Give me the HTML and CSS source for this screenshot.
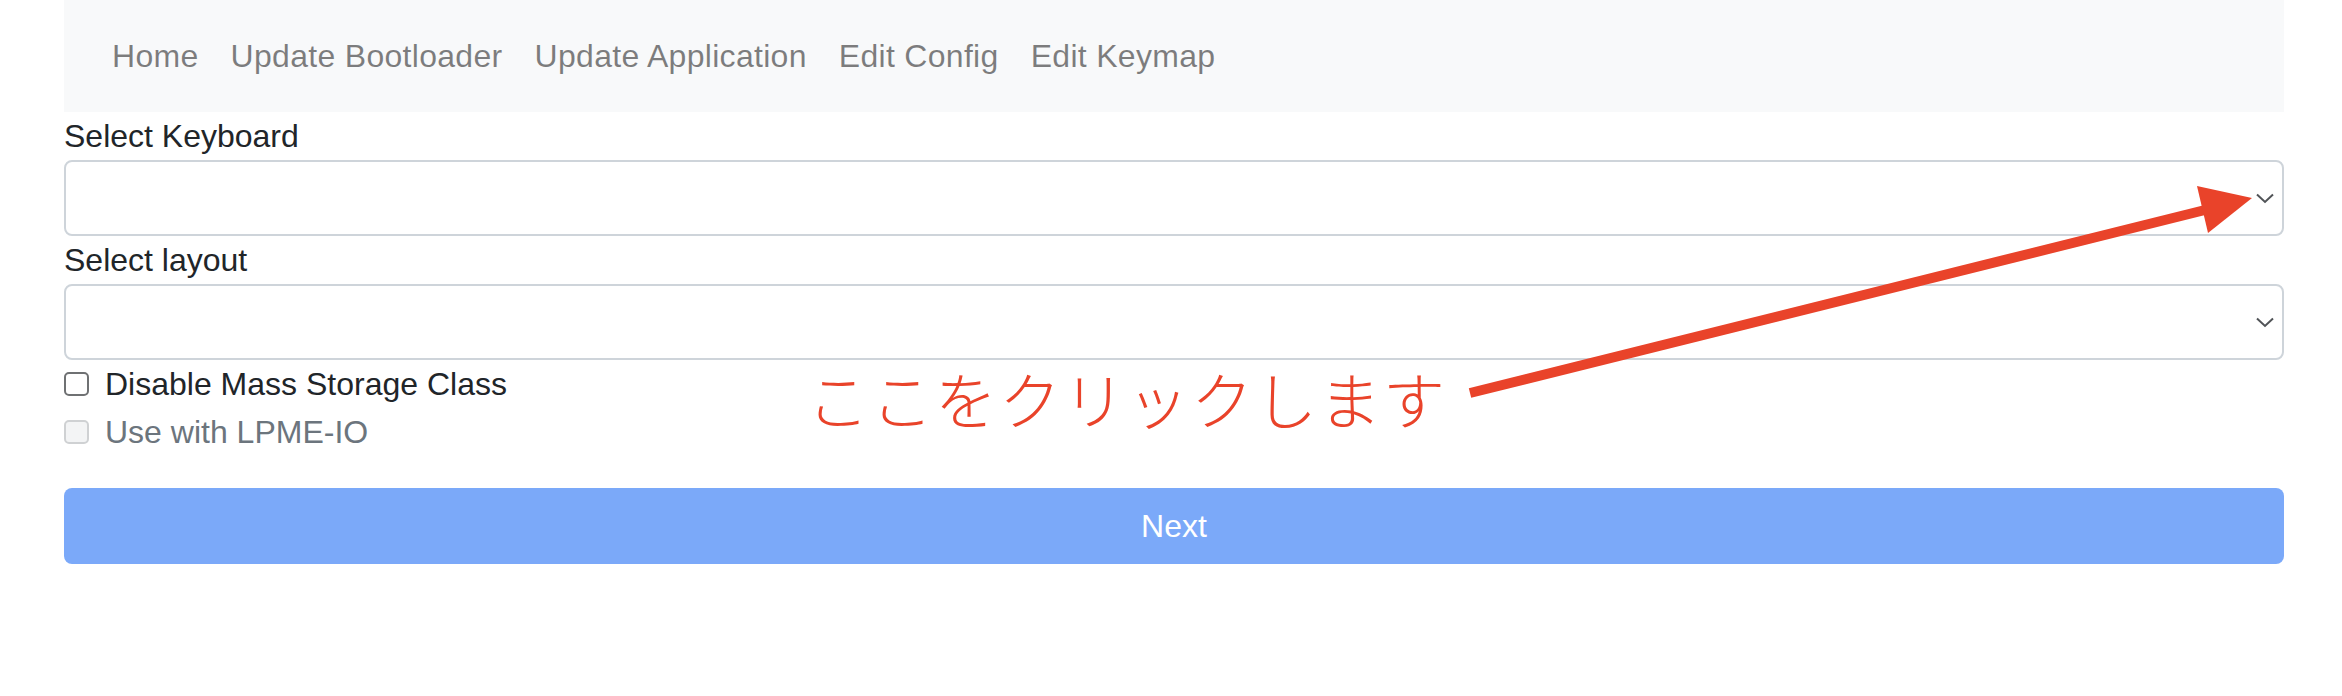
FILE: index.html
```html
<!DOCTYPE html>
<html lang="ja">
<head>
<meta charset="utf-8">
<title>Keyboard Setup</title>
<link rel="stylesheet" href="styles.css">
</head>
<body>
<div class="page">
  <div class="container">
    <nav class="navbar">
      <ul class="nav">
        <li><a class="nav-link" href="#">Home</a></li>
        <li><a class="nav-link" href="#">Update Bootloader</a></li>
        <li><a class="nav-link" href="#">Update Application</a></li>
        <li><a class="nav-link" href="#">Edit Config</a></li>
        <li><a class="nav-link" href="#">Edit Keymap</a></li>
      </ul>
    </nav>
    <form class="form">
      <div class="field">
        <label class="label">Select Keyboard</label>
        <div class="select">
          <svg class="chevron" width="18" height="11" viewBox="0 0 18 11"><path d="M1 1.5 L9 9 L17 1.5" fill="none" stroke="#505357" stroke-width="2"/></svg>
        </div>
      </div>
      <div class="field">
        <label class="label">Select layout</label>
        <div class="select">
          <svg class="chevron" width="18" height="11" viewBox="0 0 18 11"><path d="M1 1.5 L9 9 L17 1.5" fill="none" stroke="#505357" stroke-width="2"/></svg>
        </div>
      </div>
      <label class="check"><input type="checkbox" class="box"><span>Disable Mass Storage Class</span></label>
      <label class="check disabled"><input type="checkbox" class="box" disabled><span>Use with LPME-IO</span></label>
      <button type="button" class="btn" disabled>Next</button>
    </form>
  </div>
  <div class="annotation">
    <svg class="arrow" width="2342" height="696" viewBox="0 0 2342 696">
      <line x1="1470" y1="393" x2="2205" y2="210" stroke="#e9432a" stroke-width="10"/>
      <polygon points="2197,186 2252,198 2208,233" fill="#e9432a"/>
    </svg>
    <span class="note">ここをクリックします</span>
  </div>
</div>
</body>
</html>
```

FILE: styles.css
```css
html, body {
  margin: 0;
  padding: 0;
  background: #ffffff;
}

body {
  font-family: "Liberation Sans", Arial, sans-serif;
  font-size: 32px;
  color: #212529;
}

.page {
  position: relative;
  width: 2342px;
  height: 696px;
  overflow: hidden;
}

.container {
  width: 2220px;
  margin-left: 64px;
}

.navbar {
  background: #f8f9fa;
  padding: 16px 32px;
}

.nav {
  display: flex;
  list-style: none;
  margin: 0;
  padding: 0;
}

.nav-link {
  display: block;
  padding: 16px;
  line-height: 48px;
  font-size: 32px;
  letter-spacing: 0.3px;
  color: rgba(0, 0, 0, 0.5);
  text-decoration: none;
}

.form {
  display: flex;
  flex-direction: column;
}

.field {
  display: flex;
  flex-direction: column;
}

.label {
  display: block;
  line-height: 48px;
  font-size: 32px;
  color: #212529;
}

.select {
  box-sizing: border-box;
  height: 76px;
  border: 2px solid #ced4da;
  border-radius: 8px;
  background: #ffffff;
  display: flex;
  align-items: center;
  justify-content: flex-end;
  padding-right: 8px;
}

.chevron {
  display: block;
}

.check {
  display: flex;
  align-items: center;
  height: 48px;
  line-height: 48px;
  font-size: 32px;
  color: #212529;
}

.check.disabled {
  color: #6c757d;
}

.box {
  appearance: none;
  -webkit-appearance: none;
  box-sizing: border-box;
  width: 25px;
  height: 24px;
  margin: 0 16px 0 0;
  border: 2px solid #6f7173;
  border-radius: 5px;
  background: #ffffff;
}

.box:disabled {
  border-color: #cfd1d3;
  background: #f3f4f5;
}

.btn {
  margin-top: 32px;
  height: 76px;
  width: 100%;
  border: none;
  border-radius: 8px;
  background: #7ba9f9;
  color: #ffffff;
  font-family: "Liberation Sans", Arial, sans-serif;
  font-size: 32px;
  line-height: 48px;
  padding: 0;
}

.annotation {
  position: absolute;
  top: 0;
  left: 0;
  width: 2342px;
  height: 696px;
  pointer-events: none;
}

.arrow {
  position: absolute;
  top: 0;
  left: 0;
}

.note {
  position: absolute;
  left: 807px;
  top: 367px;
  font-family: "Noto Sans CJK JP", sans-serif;
  font-weight: 300;
  font-size: 62px;
  line-height: 62px;
  letter-spacing: 2px;
  color: #e9432a;
  white-space: nowrap;
}
```
